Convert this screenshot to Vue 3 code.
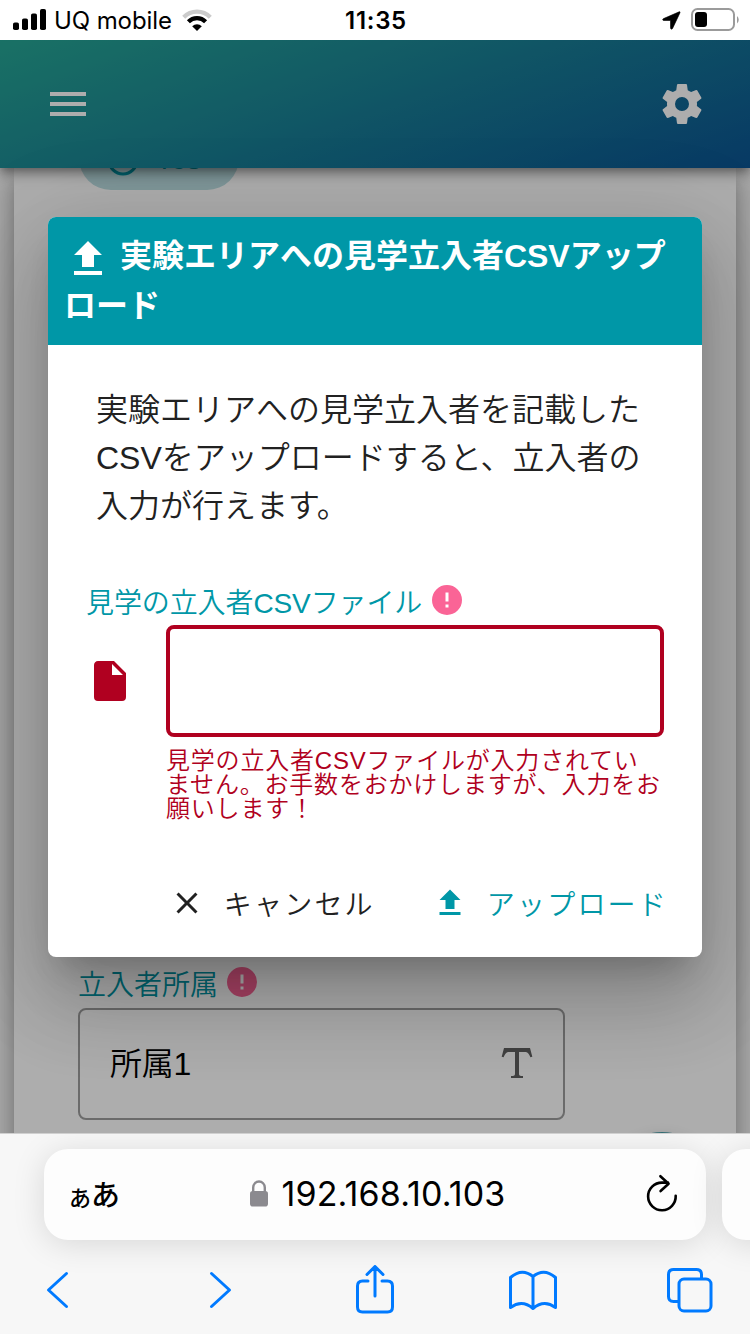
<script setup>
const icons = {
  menu: 'M3,6H21V8H3V6M3,11H21V13H3V11M3,16H21V18H3V16Z',
  cog: 'M12,15.5A3.5,3.5 0 0,1 8.5,12A3.5,3.5 0 0,1 12,8.5A3.5,3.5 0 0,1 15.5,12A3.5,3.5 0 0,1 12,15.5M19.43,12.97C19.47,12.65 19.5,12.33 19.5,12C19.5,11.67 19.47,11.34 19.43,11L21.54,9.37C21.73,9.22 21.78,8.95 21.66,8.73L19.66,5.27C19.54,5.05 19.27,4.96 19.05,5.05L16.56,6.05C16.04,5.66 15.5,5.32 14.87,5.07L14.5,2.42C14.46,2.18 14.25,2 14,2H10C9.75,2 9.54,2.18 9.5,2.42L9.13,5.07C8.5,5.32 7.96,5.66 7.44,6.05L4.95,5.05C4.73,4.96 4.46,5.05 4.34,5.27L2.34,8.73C2.21,8.95 2.27,9.22 2.46,9.37L4.57,11C4.53,11.34 4.5,11.67 4.5,12C4.5,12.33 4.53,12.65 4.57,12.97L2.46,14.63C2.27,14.78 2.21,15.05 2.34,15.27L4.34,18.73C4.46,18.95 4.73,19.03 4.95,18.95L7.44,17.94C7.96,18.34 8.5,18.68 9.13,18.93L9.5,21.58C9.54,21.82 9.75,22 10,22H14C14.25,22 14.46,21.82 14.5,21.58L14.87,18.93C15.5,18.67 16.04,18.34 16.56,17.94L19.05,18.95C19.27,19.03 19.54,18.95 19.66,18.73L21.66,15.27C21.78,15.05 21.73,14.78 21.54,14.63L19.43,12.97Z',
  upload: 'M9,16V10H5L12,3L19,10H15V16H9M5,20V18H19V20H5Z',
  file: 'M13,9V3.5L18.5,9M6,2C4.89,2 4,2.89 4,4V20A2,2 0 0,0 6,22H18A2,2 0 0,0 20,20V8L14,2H6Z',
  alert: 'M13,13H11V7H13M13,17H11V15H13M12,2A10,10 0 0,0 2,12A10,10 0 0,0 12,22A10,10 0 0,0 22,12A10,10 0 0,0 12,2Z',
  close: 'M19,6.41L17.59,5L12,10.59L6.41,5L5,6.41L10.59,12L5,17.59L6.41,19L12,13.41L17.59,19L19,17.59L13.41,12L19,6.41Z',
  text: 'M18.5,4L19.66,8.35L18.7,8.61C18.25,7.74 17.79,6.87 17.26,6.43C16.73,6 16.11,6 15.5,6H13V16.5C13,17 13,17.5 13.33,17.75C13.67,18 14.33,18 15,18V19H9V18C9.67,18 10.33,18 10.67,17.75C11,17.5 11,17 11,16.5V6H8.5C7.89,6 7.27,6 6.74,6.43C6.21,6.87 5.75,7.74 5.3,8.61L4.34,8.35L5.5,4H18.5Z'
}
</script>

<template>
  <div class="phone">
    <header class="status">
      <div class="carrier">
        <svg class="signal" width="34" height="22" viewBox="0 0 34 22">
          <rect x="0" y="13.5" width="6" height="7.5" rx="1.8" />
          <rect x="9" y="9.5" width="6" height="11.5" rx="1.8" />
          <rect x="18" y="4.5" width="6" height="16.5" rx="1.8" />
          <rect x="27" y="0" width="6" height="21" rx="1.8" />
        </svg>
        <span class="carrier-name">UQ mobile</span>
        <svg class="wifi" width="30" height="22" viewBox="0 0 30 22">
          <path d="M1.7 8.2A18.5 18.5 0 0 1 28.3 8.2" fill="none" stroke="#cbcbcb" stroke-width="4.2" />
          <path d="M6.4 12.8A12 12 0 0 1 23.6 12.8" fill="none" stroke="#000" stroke-width="4.2" />
          <path d="M10.2 17.2A7 7 0 0 1 19.8 17.2L15 22Z" />
        </svg>
      </div>
      <div class="clock">11:35</div>
      <div class="indicators">
        <svg width="19" height="19" viewBox="0 0 19 19">
          <path d="M17.2 .8 1.6 7.6C.2 8.3.5 9.5 1.8 9.5H8.5V16.8C8.5 18.4 10.1 18.6 10.7 17.2L17.9 1.9C18.3 .9 17.9.5 17.2.8Z" stroke="#000" stroke-width=".6" />
        </svg>
        <svg class="battery" width="48" height="24" viewBox="0 0 48 24">
          <rect x="1" y="1" width="42" height="21" rx="5.5" fill="none" stroke="#9b9b9b" stroke-width="2" />
          <rect x="4" y="4" width="12" height="15" rx="3" />
          <path d="M46 8Q49.5 11.5 46 15.5Z" fill="#9b9b9b" />
        </svg>
      </div>
    </header>

    <main class="viewport">
      <nav class="appbar">
        <svg class="icon-lg" viewBox="0 0 24 24"><path :d="icons.menu" /></svg>
        <svg class="icon-lg" viewBox="0 0 24 24"><path :d="icons.cog" /></svg>
      </nav>
      <section class="sheet">
        <div class="chip">
          <svg width="36" height="36" viewBox="0 0 36 36"><circle cx="18" cy="18" r="14" /></svg>
          <span>Yes</span>
        </div>
        <div class="label">立入者所属<svg class="alert" viewBox="0 0 24 24"><path :d="icons.alert" /></svg></div>
        <div class="field">
          <span>所属1</span>
          <svg class="icon-lg" viewBox="0 0 24 24"><path :d="icons.text" /></svg>
        </div>
      </section>
      <div class="fab"></div>

      <div class="overlay">
        <div class="dialog">
          <h2 class="title"><svg class="icon-lg" viewBox="0 0 24 24"><path :d="icons.upload" /></svg> 実験エリアへの見学立入者CSVアップ<br>ロード</h2>
          <p class="message">実験エリアへの見学立入者を記載した<br>CSVをアップロードすると、立入者の<br>入力が行えます。</p>
          <div class="label upload-label">見学の立入者CSVファイル<svg class="alert" viewBox="0 0 24 24"><path :d="icons.alert" /></svg></div>
          <div class="file-row">
            <svg class="icon-lg" viewBox="0 0 24 24"><path :d="icons.file" /></svg>
            <div class="file-input"></div>
          </div>
          <p class="error">見学の立入者CSVファイルが入力されてい<br>ません。お手数をおかけしますが、入力をお<br>願いします！</p>
          <div class="actions">
            <button class="btn"><svg viewBox="0 0 24 24"><path :d="icons.close" /></svg>キャンセル</button>
            <button class="btn primary"><svg viewBox="0 0 24 24"><path :d="icons.upload" /></svg>アップロード</button>
          </div>
        </div>
      </div>
    </main>

    <footer class="browser">
      <div class="tabs">
        <div class="address">
          <span class="reader"><small>あ</small>あ</span>
          <div class="url">
            <svg width="18" height="27" viewBox="0 0 18 27">
              <path d="M3.2 12V7.5a5.8 6 0 0 1 11.6 0V12" fill="none" stroke="#8b8a8f" stroke-width="2.4" />
              <rect x="0" y="11" width="18" height="15.5" rx="2.8" fill="#8b8a8f" />
            </svg>
            <span>192.168.10.103</span>
          </div>
          <svg class="reload" width="32" height="38" viewBox="0 0 32 38">
            <path d="M29.7 21.8A13.8 13.8 0 1 1 16 8.6H22M14.4 2.2 22.6 9.7 14.6 17" />
          </svg>
        </div>
        <div class="next-tab"></div>
      </div>
      <div class="tools">
        <svg class="back" width="24" height="40" viewBox="0 0 24 40"><path d="M20.5 3.5 2.5 20 20.5 36.5" /></svg>
        <svg class="forward" width="24" height="40" viewBox="0 0 24 40"><path d="M3.5 3.5 21.5 20 3.5 36.5" /></svg>
        <svg class="share" width="40" height="50" viewBox="0 0 40 50"><path d="M13 16H7.5Q2.5 16 2.5 21V42Q2.5 47 7.5 47H32.5Q37.5 47 37.5 42V21Q37.5 16 32.5 16H27M20 31V2M12 9.5 20 1.5 28 9.5" /></svg>
        <svg class="book" width="50" height="42" viewBox="0 0 50 42"><path d="M25 8V39.5Q14 30 2.5 38.5V8.5Q14-1.5 25 7.5 36-1.5 47.5 8.5V38.5Q36 30 25 39.5" /></svg>
        <svg class="windows" width="46" height="46" viewBox="0 0 46 46"><path d="M11 34.5H6.5Q1.5 34.5 1.5 29.5V7.5Q1.5 2.5 6.5 2.5H29.5Q34.5 2.5 34.5 7.5V11" /><rect x="12" y="12" width="32" height="32" rx="5" /></svg>
      </div>
    </footer>
  </div>
</template>

<style>
body { margin: 0; background: #fff; }
</style>

<style scoped>
* { box-sizing: border-box; }
.phone {
  width: 750px; height: 1334px; overflow: hidden;
  display: flex; flex-direction: column;
  font-family: "Liberation Sans", "Noto Sans CJK JP", sans-serif;
  font-weight: 350;
}
svg { display: block; flex: none; }
h2, p { margin: 0; }
.icon-lg { width: 48px; height: 48px; fill: currentColor; }

.status {
  flex: none; height: 40px; background: #fff; color: #000;
  display: grid; grid-template-columns: 1fr 64px 1fr; align-items: center;
  padding: 0 11px 0 13px;
  font-family: Inter, sans-serif; font-size: 24px; line-height: 40px;
}
.carrier { display: flex; align-items: center; font-weight: 400; }
.signal { margin-bottom: 2px; }
.carrier-name { margin-left: 7px; width: 118px; padding-top: 1px; white-space: nowrap; letter-spacing: -.1px; }
.wifi { margin: 0 0 1px 10px; }
.clock { padding-top: 1px; font-weight: 600; text-align: center; white-space: nowrap; letter-spacing: .7px; }
.indicators { display: flex; justify-content: flex-end; align-items: center; gap: 10px; }
.battery { margin-bottom: 1px; }

.viewport { flex: none; height: 1093px; position: relative; overflow: hidden; background: #fff; }
.appbar {
  position: relative; z-index: 1; height: 128px; padding: 0 44px;
  display: flex; justify-content: space-between; align-items: center;
  color: #fff; background: linear-gradient(160deg, #26a796, #0b5594);
  box-shadow: 0 4px 8px -2px rgba(0,0,0,.3), 0 8px 10px rgba(0,0,0,.16), 0 2px 20px rgba(0,0,0,.14);
}
.sheet {
  display: flow-root; margin: 0 14px; height: 1100px; padding: 0 64px;
  background: #fff;
  box-shadow: 0 10px 12px -6px rgba(0,0,0,.2), 0 16px 20px 2px rgba(0,0,0,.18), 0 6px 36px 4px rgba(0,0,0,.16);
}
.chip {
  width: 160px; height: 64px; margin-top: -42px; margin-left: 1px; border-radius: 32px;
  background: #bbdee2; color: #0097a7; font-size: 28px; font-weight: 400; line-height: 32px;
  display: flex; align-items: center; gap: 14px; padding: 3px 0 0 26px;
}
.chip circle { fill: none; stroke: currentColor; stroke-width: 3; }
.label {
  display: flex; align-items: center; height: 50px;
  color: #0097a7; font-size: 28px; white-space: nowrap;
}
.alert { width: 36px; height: 36px; fill: #fa6496; margin: -3px 0 0 6px; }
.sheet .label { margin-top: 768px; }
.field {
  width: 487px; height: 112px; border: 2px solid #9e9e9e; border-radius: 8px;
  display: flex; align-items: center; justify-content: space-between;
  padding: 0 22px 0 30px; font-size: 32px; color: #000;
}
.field span { padding-bottom: 6px; letter-spacing: -.3px; }
.field .icon-lg { color: #616161; }
.fab {
  position: absolute; left: 606px; top: 1092px; width: 112px; height: 112px;
  border-radius: 50%; background: #4c9fa9; box-shadow: 0 4px 14px rgba(0,0,0,.15);
}

.overlay {
  position: absolute; inset: 0; z-index: 2; background: rgba(0,0,0,.32);
  display: flex; align-items: center; justify-content: center; padding-top: 1px;
}
.dialog {
  width: 654px; height: 740px; border-radius: 8px; overflow: hidden; background: #fff;
  display: flex; flex-direction: column;
  box-shadow: 0 22px 30px -14px rgba(0,0,0,.2), 0 48px 76px 6px rgba(0,0,0,.14), 0 18px 92px 16px rgba(0,0,0,.12);
}
.title {
  height: 128px; flex: none; padding: 14px 16px 0; color: #fff; background: #0097a7;
  font-size: 32px; line-height: 50px; font-weight: 700; white-space: nowrap; word-spacing: -1px;
}
.title .icon-lg { display: inline-block; vertical-align: -4px; margin: -12px 0; }
.message { padding: 41px 48px 0; font-size: 32px; line-height: 48px; color: #212121; white-space: nowrap; }
.upload-label { margin: 47px 0 0 38px; height: 48px; padding-bottom: 1px; letter-spacing: -.1px; }
.upload-label .alert { margin: -2px 0 0 7px; }
.file-row { display: flex; align-items: center; margin-left: 38px; gap: 32px; height: 112px; }
.file-row .icon-lg { color: #b00020; }
.file-input { width: 498px; height: 112px; border: 4px solid #b00020; border-radius: 8px; }
.error {
  margin: 12px 0 0 118px; color: #b00020; font-size: 24px; line-height: 24px;
  letter-spacing: .8px; white-space: nowrap;
}
.actions { display: flex; justify-content: flex-end; gap: 57px; margin-top: 46px; padding-right: 34px; height: 72px; }
.btn {
  border: 0; background: none; padding: 0; display: flex; align-items: center; gap: 19px;
  font: inherit; font-size: 28px; letter-spacing: 2.2px; color: #212121; white-space: nowrap;
}
.btn svg { width: 36px; height: 36px; fill: currentColor; }
.primary { color: #0097a7; }

.browser { height: 201px; background: #f7f7f7; border-top: 1px solid #d0d0d0; overflow: hidden; }
.tabs { display: flex; gap: 16px; padding: 15px 0 0 44px; }
.address, .next-tab {
  flex: none; height: 91px; border-radius: 24px; background: #fdfdfd;
  box-shadow: 0 4px 32px rgba(0,0,0,.13);
}
.address { width: 662px; display: grid; grid-template-columns: 80px 1fr 80px; align-items: center; padding: 0 28px 0 25px; }
.next-tab { width: 90px; }
.reader { font-family: "Noto Sans CJK JP", sans-serif; font-weight: 500; font-size: 29px; line-height: 40px; white-space: nowrap; }
.reader small { font-size: 22px; }
.url { display: flex; align-items: center; justify-content: center; gap: 14px; padding: 0 0 2px 8px; font-family: Inter, sans-serif; font-size: 34px; letter-spacing: .12px; font-weight: 400; white-space: nowrap; }
.reload { justify-self: end; margin-bottom: 3px; fill: none; stroke: #000; stroke-width: 2.6; stroke-linecap: round; stroke-linejoin: round; }
.tools { display: flex; align-items: center; height: 50px; margin-top: 25px; padding-left: 46px; }
.tools svg { fill: none; stroke: #007aff; stroke-width: 3; stroke-linecap: round; stroke-linejoin: round; }
.forward { margin-left: 138px; }
.share { margin-left: 123px; }
.book { margin-left: 113px; }
.windows { margin-left: 109px; }
</style>
